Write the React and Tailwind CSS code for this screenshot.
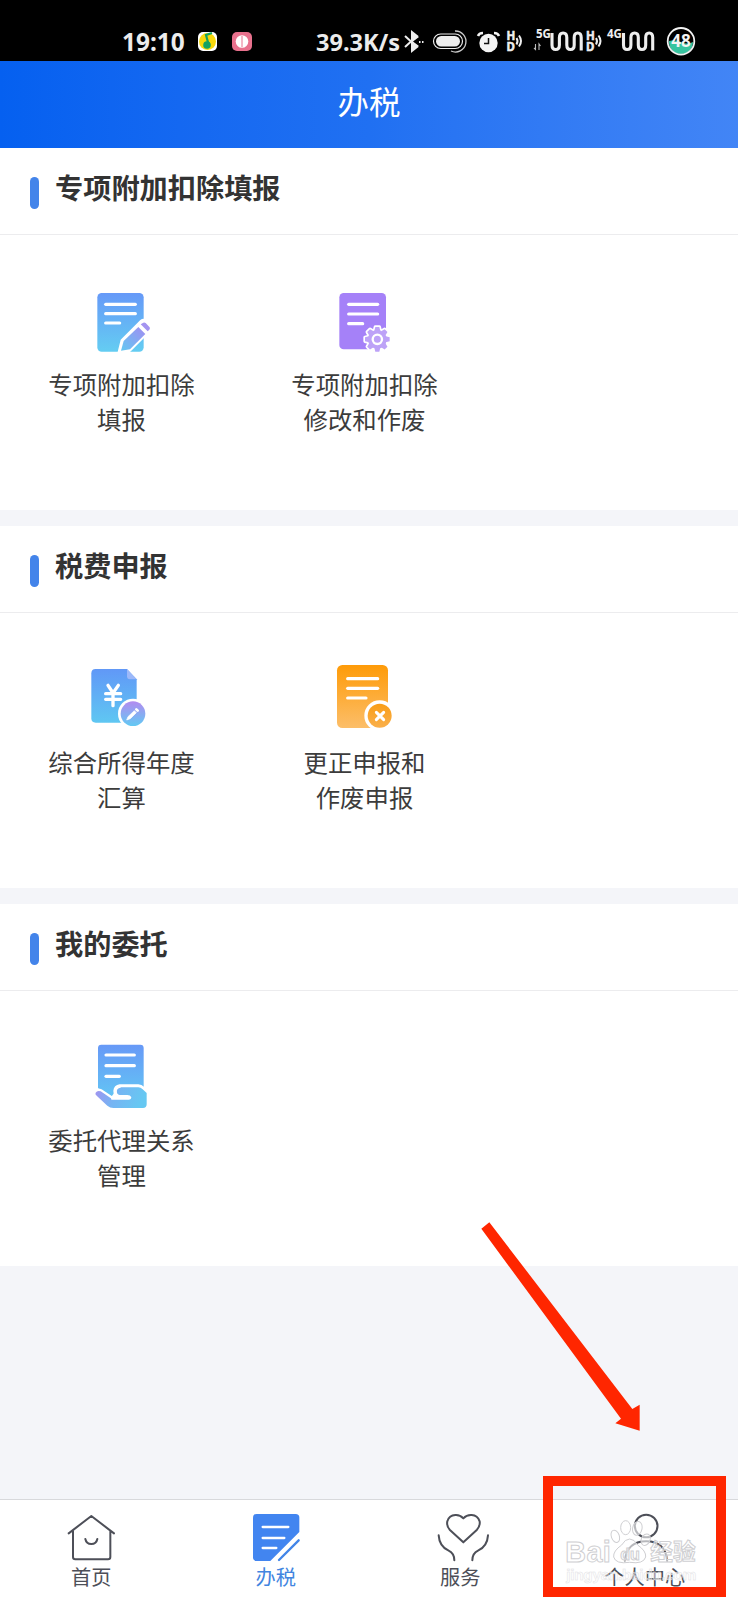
import React from "react";

const lines = (rows, color = "#fff", w = 9.5) =>
  rows.map(([x1, x2, y]) => (
    <path key={y} d={`M${x1} ${y}H${x2}`} stroke={color} strokeWidth={w} strokeLinecap="round" />
  ));

const Grad = ({ id, from, to }) => (
  <linearGradient id={id} x1="0" y1="0" x2="0" y2="1">
    <stop offset="0" stopColor={from} />
    <stop offset="1" stopColor={to} />
  </linearGradient>
);

function TileSvg({ box, children }) {
  return (
    <svg viewBox={box} width="243" height="132" fill="none" className="block">
      {children}
    </svg>
  );
}

const FormPencil = () => (
  <TileSvg box="-90 -105 729 396">
    <defs>
      <Grad id="a1" from="#6699f8" to="#64cdf2" />
      <linearGradient id="a2" x1="1" y1="0" x2="0" y2="1">
        <stop offset="0" stopColor="#a28cf2" />
        <stop offset="1" stopColor="#62c8f2" />
      </linearGradient>
    </defs>
    <rect x="202" y="69" width="139" height="176" rx="13" fill="url(#a1)" />
    {lines([[227, 316, 103], [227, 316, 131], [227, 269, 159]])}
    <path d="M262 250L272 209L331 150Q341 142 352 151L363 162Q373 172 363 183L304 242L296 250Z" fill="#fff" />
    <path d="M273 242L281 213L325 171L346 192L300 238Z" fill="url(#a2)" />
    <path d="M332 163L340 158Q343 156 347 159L359 172Q361 176 358 179L353 184Z" fill="#a494f0" />
  </TileSvg>
);

const gear = Array.from({ length: 8 }, (_, i) => i);
const FormGear = () => (
  <TileSvg box="-81 -105 729 396">
    <rect x="208" y="69" width="140" height="169" rx="13" fill="#a581f8" />
    {lines([[236, 323, 103], [236, 323, 132], [236, 278, 161]])}
    <g transform="translate(322 208)">
      {[["#fff", 5], ["#bda2f7", 0]].map(([c, e]) => (
        <g key={c} fill={c} stroke={c} strokeWidth={e * 2} strokeLinejoin="round">
          <circle r="28" />
          {gear.map((i) => (
            <path key={i} transform={`rotate(${i * 45})`} d="M-9 -25L-6 -37H6L9 -25Z" />
          ))}
        </g>
      ))}
      <circle r="14" stroke="#fff" strokeWidth="7" />
    </g>
  </TileSvg>
);

const YenEdit = () => (
  <TileSvg box="-90 -81 729 396">
    <defs>
      <Grad id="c1" from="#6198f7" to="#5fc7f2" />
      <Grad id="c2" from="#b28bf0" to="#62c9f3" />
    </defs>
    <path d="M197 87H291L320 118V235Q320 248 307 248H197Q184 248 184 235V100Q184 87 197 87Z" fill="url(#c1)" />
    <path d="M291 87L320 118H300Q291 118 291 109Z" fill="#9cb8f9" />
    <path d="M234 136L249 159L265 136M249 160V197M227 161H272M227 178H272" stroke="#fff" strokeWidth="10" strokeLinecap="round" />
    <circle cx="309" cy="221" r="45" fill="#fff" />
    <circle cx="309" cy="221" r="37" fill="url(#c2)" />
    <path d="M290 240L294 230L313 212L319 218L301 236Z" fill="#fff" stroke="#fff" strokeLinejoin="round" strokeWidth="2" />
    <path d="M319 208L323 212" stroke="#fff" strokeWidth="8" strokeLinecap="round" />
  </TileSvg>
);

const FormCancel = () => (
  <TileSvg box="-81 -81 729 396">
    <defs>
      <Grad id="d1" from="#fe9b08" to="#fcbe69" />
      <Grad id="d2" from="#f99d16" to="#fab04c" />
    </defs>
    <rect x="201" y="75" width="153" height="189" rx="16" fill="url(#d1)" />
    {lines([[233, 323, 116], [233, 323, 145], [233, 288, 174]])}
    <circle cx="329" cy="227" r="46" fill="#fff" />
    <circle cx="329" cy="227" r="36" fill="url(#d2)" />
    <path d="M319 217L341 239M341 217L319 239" stroke="#fff" strokeWidth="9" strokeLinecap="round" />
  </TileSvg>
);

const FormHand = () => (
  <TileSvg box="-90 -102 729 396">
    <defs>
      <Grad id="e1" from="#6799f7" to="#63c4f4" />
      <linearGradient id="e2" x1="0" y1="0" x2="1" y2="0.2">
        <stop offset="0" stopColor="#a492f0" />
        <stop offset=".45" stopColor="#76b4f3" />
        <stop offset="1" stopColor="#66c8f2" />
      </linearGradient>
    </defs>
    <path d="M214 59H331Q341 59 341 69V192H262L244 215L204 190V69Q204 59 214 59Z" fill="url(#e1)" />
    {lines([[228, 313, 90], [228, 313, 122], [228, 268, 154]])}
    <path
      d="M197 203Q202 195 212 199L246 222H297Q301 222 301 217Q299 212 292 212H268Q257 210 257 198Q258 187 270 185H325Q332 185 338 191L350 204V238Q350 249 339 249H250Q240 249 232 242L200 212Q194 208 197 203Z"
      fill="#fff" stroke="#fff" strokeWidth="14" strokeLinejoin="round" />
    <path
      d="M197 203Q202 195 212 199L246 222H297Q301 222 301 217Q299 212 292 212H268Q260 210 260 198Q260 189 272 187H325Q332 187 338 193L350 204V238Q350 249 339 249H250Q240 249 232 242L200 212Q194 208 197 203Z"
      fill="url(#e2)" />
    <path d="M246 221H297Q301 221 301 217Q299 213 292 213H268Q257 210 257 198Q258 187 270 185" stroke="#fff" strokeWidth="6" strokeLinecap="round" />
  </TileSvg>
);

function Tile({ Icon, text }) {
  return (
    <div className="-mt-px flex w-[243px] flex-col items-center pt-px text-center text-[24.4px] leading-[35.5px] text-[#3c3c3c]">
      <Icon />
      <div className="-mt-[1.5px] flex flex-col">
        {text.map((t) => (
          <span key={t}>{t}</span>
        ))}
      </div>
    </div>
  );
}

const sections = [
  {
    title: "专项附加扣除填报",
    tiles: [
      { Icon: FormPencil, text: ["专项附加扣除", "填报"] },
      { Icon: FormGear, text: ["专项附加扣除", "修改和作废"] },
    ],
  },
  {
    title: "税费申报",
    tiles: [
      { Icon: YenEdit, text: ["综合所得年度", "汇算"] },
      { Icon: FormCancel, text: ["更正申报和", "作废申报"] },
    ],
  },
  { title: "我的委托", tiles: [{ Icon: FormHand, text: ["委托代理关系", "管理"] }] },
];

function Section({ title, tiles }) {
  return (
    <section className="h-[362px] bg-white">
      <div className="flex h-[87px] items-start border-b border-[#ececee] pl-[30px]">
        <div className="mt-[29px] h-8 w-[9px] rounded-full bg-[#4384ea]" />
        <h2 className="mt-[19px] ml-4 text-[28.2px] leading-10 font-bold text-[#333]">{title}</h2>
      </div>
      <div className="flex">
        {tiles.map((t) => (
          <Tile key={t.text.join("")} {...t} />
        ))}
      </div>
    </section>
  );
}

function Slice({ x, w, children }) {
  return (
    <svg viewBox={`${x} 0 ${w} 61`} width={w} height="61" fill="none" className="block shrink-0">
      {children}
    </svg>
  );
}

const Hd = ({ x }) => (
  <>
    <text fill="#eee" stroke="#eee" strokeWidth=".5" fontFamily="Noto Sans" fontWeight="700" fontSize="11.5">
      <tspan x={x} y="39.500">H</tspan>
      <tspan x={x} y="50.500">D</tspan>
    </text>
    <path d={`M${x + 10} 38q2 3 0 6.500M${x + 12.5} 35.500q4 5.500 0 11`} stroke="#eee" strokeWidth="2" />
  </>
);

const Wave = ({ x }) => (
  <path
    d={`M${x} 33V45q0 4.500 3.700 4.500t3.700 -4.500V37.500q0 -4.500 3.700 -4.500t3.700 4.500V45q0 4.500 3.700 4.500t3.700 -4.500V37.500q0 -4.500 3.500 -4.500t3.500 4.500V50.500`}
    stroke="#eee" strokeWidth="3.100" />
);

function StatusBar() {
  return (
    <div className="flex h-[61px] items-center bg-black font-['Noto_Sans'] text-[24.4px] font-bold text-[#ececec]">
      <span className="ml-[122px] mt-[22px] w-[75px] leading-9">19:10</span>
      <Slice x={197} w={119}>
        <rect x="198" y="32" width="19" height="19" rx="5" fill="#fff" />
        <circle cx="207.500" cy="41.500" r="8.500" fill="#f7d80c" />
        <circle cx="207" cy="45" r="3.800" fill="#13a262" />
        <path d="M209 46L206 35L212 33" stroke="#13a262" strokeWidth="2.200" />
        <rect x="232" y="32" width="20" height="19" rx="5" fill="#e8718d" />
        <circle cx="242" cy="41.500" r="6.300" fill="#fff" />
        <path d="M242 36V47" stroke="#e8718d" />
      </Slice>
      <span className="mt-[22px] w-[87px] text-[23.5px] leading-9 whitespace-nowrap">39.3K/s</span>
      <Slice x={403} w={26}>
        <path d="M405 36L417 47L412 51V32L417 36L405 47" stroke="#eee" strokeWidth="2" />
        <path d="M412 32L419 37L413 41.500L419 46L412 51Z" fill="#eee" />
        <path d="M419 42h1.500M422 42h1.500" stroke="#eee" strokeWidth="2" />
      </Slice>
      <Slice x={429} w={45}>
        <rect x="433.500" y="34" width="29" height="14.500" rx="7.200" stroke="#eee" strokeWidth="1.200" />
        <rect x="436" y="36" width="24" height="10.500" rx="5.200" fill="#eee" />
        <path d="M455 31A10.500 10.500 0 1 1 451 51" stroke="#ccc" strokeWidth="1.300" />
      </Slice>
      <Slice x={474} w={30}>
        <circle cx="488.500" cy="43" r="9.200" fill="#f4f4f4" />
        <path d="M478 36Q479 33 483 33M494 33Q498 33 499 36" stroke="#f4f4f4" strokeWidth="2.500" />
        <path d="M488.500 38V43.500H484" stroke="#111" strokeWidth="1.500" />
      </Slice>
      <Slice x={504} w={28}>
        <Hd x={506.5} />
      </Slice>
      <Slice x={532} w={53}>
        <text x="536" y="38" fill="#eee" fontFamily="Noto Sans" fontWeight="700" fontSize="11.500">5G</text>
        <path d="M535.500 44V49.500L534 48M539 50V44L540.500 46" stroke="#bbb" strokeWidth="1.100" />
        <Wave x={552} />
      </Slice>
      <Slice x={585} w={77}>
        <Hd x={586} />
        <text x="607" y="38" fill="#eee" fontFamily="Noto Sans" fontWeight="700" fontSize="11.500">4G</text>
        <Wave x={623.5} />
      </Slice>
      <Slice x={662} w={40}>
        <path d="M669 41Q675 39 681 42T693 42A12 12 0 0 1 669 42Z" fill="#37c4a0" />
        <circle cx="681" cy="41.300" r="13.300" stroke="#f2f2f2" strokeWidth="1.800" />
        <text x="681" y="47" textAnchor="middle" fill="#f4f4f4" fontFamily="Noto Sans" fontWeight="700" fontSize="17">48</text>
      </Slice>
    </div>
  );
}

function NavSvg({ box, color = "#4d4f58", children }) {
  return (
    <svg viewBox={box} width="184.5" height="62" fill="none" stroke={color} strokeWidth="6" strokeLinecap="round" strokeLinejoin="round" className="block">
      {children}
    </svg>
  );
}

const Home = () => (
  <NavSvg box="-120 30 553.5 186">
    <path d="M86 130L154 78L222 130M99 124V201Q99 208 106 208H204Q211 208 211 201V124M136 147Q139 162 154 162T172 147" />
  </NavSvg>
);
const Tax = () => (
  <NavSvg box="435 30 553.5 186" color="#fff">
    <path d="M650 72H767Q778 72 778 83V126L691 213H650Q639 213 639 202V83Q639 72 650 72Z" fill="#4285f0" stroke="none" />
    <path d="M668 111H745M668 144H733M668 174H709" strokeWidth="7" />
    <path d="M717 210L776 151" stroke="#4285e8" strokeWidth="7" />
  </NavSvg>
);
const Service = () => (
  <NavSvg box="-93 120 553.5 186">
    <path d="M190 247L149 209Q139 197 142 184Q147 166 166 165Q180 164 190 175Q200 164 215 165Q233 166 239 184Q241 197 231 209Z" />
    <path d="M116 226Q118 259 146 272Q163 280 163 301M264 226Q262 259 234 272Q217 280 217 301" />
  </NavSvg>
);
const Person = () => (
  <NavSvg box="461.5 120 553.5 186">
    <circle cx="738" cy="198" r="34" />
    <path d="M674 303Q680 244 738 244T801 303" />
  </NavSvg>
);

const tabs = [
  { label: "首页", Icon: Home },
  { label: "办税", Icon: Tax, active: true },
  { label: "服务", Icon: Service },
  { label: "个人中心", Icon: Person },
];

function Watermark() {
  return (
    <svg viewBox="490 170 420 210" width="140" height="70" className="absolute top-[1516.700px] left-[563.300px]" fill="#fff" fillOpacity=".6" stroke="#cfcfd2" strokeWidth="3">
      <g fontFamily="Liberation Sans" fontWeight="700">
        <text x="497" y="304" fontSize="86" textLength="136">Bai</text>
        <ellipse cx="647" cy="228" rx="12" ry="19" transform="rotate(-20 647 228)" />
        <ellipse cx="678" cy="202" rx="15" ry="21" />
        <ellipse cx="713" cy="204" rx="14" ry="21" transform="rotate(12 713 204)" />
        <ellipse cx="738" cy="238" rx="13" ry="18" transform="rotate(25 738 238)" />
        <path d="M690 236Q704 236 714 254Q740 272 738 290Q732 312 690 306Q648 312 642 290Q640 272 666 254Q676 236 690 236Z" />
        <text x="662" y="298" fontSize="48">du</text>
        <text x="752" y="299" fontSize="68" fontFamily="Noto Sans CJK SC">经验</text>
        <text x="500" y="358" fontSize="46" textLength="390" stroke="#e2e2e4" strokeWidth="1.500" fillOpacity=".4">jingyan.baidu.com</text>
      </g>
    </svg>
  );
}

export default function App() {
  return (
    <div className="relative flex h-[1600px] w-[738px] flex-col overflow-hidden bg-[#f4f5f9] font-['Noto_Sans_CJK_SC',sans-serif]">
      <StatusBar />
      <header className="flex h-[87px] justify-center bg-linear-to-r from-[#0560f0] via-[#2070f2] to-[#4285f6] text-[31.5px] leading-[78px] text-white">
        办税
      </header>
      <main className="flex grow flex-col gap-4">
        {sections.map((s) => (
          <Section key={s.title} {...s} />
        ))}
      </main>
      <nav className="flex h-[101px] shrink-0 border-t border-[#d8d9dc] bg-white">
        {tabs.map(({ label, Icon, active }) => (
          <div key={label} className={`flex w-[184.5px] flex-col items-center text-[20.2px] leading-[29px] ${active ? "text-[#4285e0]" : "text-[#4d4f58]"}`}>
            <Icon />
            <span className="-ml-0.5">{label}</span>
          </div>
        ))}
      </nav>
      <Watermark />
      <div className="absolute top-[1476px] left-[543px] h-[121px] w-[183px] border-[10px] border-[#ff2600]" />
      <svg viewBox="0 0 600 750" width="200" height="250" className="absolute top-[1200px] left-[460px]">
        <path d="M64 86L88 67L517 627L539 614V692L466 670L483 656Z" fill="#ff2600" />
      </svg>
    </div>
  );
}
